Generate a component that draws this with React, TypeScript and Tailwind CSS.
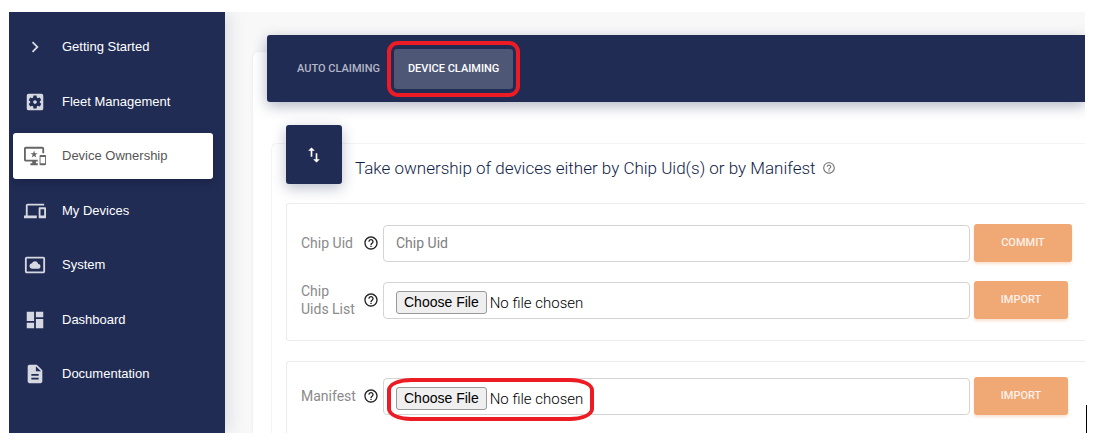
import type { ReactNode } from "react";
import type { IconType } from "react-icons";
import {
  MdChevronRight,
  MdSettingsApplications,
  MdImportantDevices,
  MdDevices,
  MdSettingsSystemDaydream,
  MdDashboard,
  MdDescription,
  MdHelpOutline,
  MdImportExport,
} from "react-icons/md";

const navItems: { label: string; icon: IconType; active?: boolean }[] = [
  { label: "Getting Started", icon: MdChevronRight },
  { label: "Fleet Management", icon: MdSettingsApplications },
  { label: "Device Ownership", icon: MdImportantDevices, active: true },
  { label: "My Devices", icon: MdDevices },
  { label: "System", icon: MdSettingsSystemDaydream },
  { label: "Dashboard", icon: MdDashboard },
  { label: "Documentation", icon: MdDescription },
];

function Sidebar() {
  return (
    <nav className="relative z-10 flex w-[216px] shrink-0 flex-col justify-between bg-[#212c55] pt-3 pr-3 pb-9 pl-1 font-['Liberation_Sans',Arial,sans-serif] text-[13px] shadow-[2px_0_18px_rgba(33,44,85,0.16)]">
      {navItems.map(({ label, icon: Icon, active }) => (
        <a
          key={label}
          href="#"
          className={
            active
              ? "flex h-[46px] items-center gap-4 rounded-[3px] bg-white pl-[11px] text-[#555] shadow-[0_4px_10px_rgba(0,0,0,0.2)]"
              : "flex h-[46px] items-center gap-4 pl-[11px] text-white"
          }
        >
          <Icon className={active ? "size-[22px] text-[#666]" : "size-[22px] text-[#d5d8e0]"} />
          {label}
        </a>
      ))}
    </nav>
  );
}

function Field({
  id,
  label,
  action,
  wide,
  children,
}: {
  id: string;
  label: string;
  action: string;
  wide?: boolean;
  children: ReactNode;
}) {
  return (
    <div className="flex h-[38px] items-center">
      <label htmlFor={id} className="w-[62px] shrink-0 pr-1 text-sm leading-[18px] text-[#8a8a8a]">
        {label}
      </label>
      <MdHelpOutline className="mr-1 size-4 shrink-0 text-[#222]" />
      {children}
      <div className="ml-1 w-[111px] shrink-0">
        <button
          type="button"
          className={
            wide
              ? "h-[38px] w-[98px] rounded-[3px] bg-[#f0a875] text-[11px] font-medium text-[#fdf1e8] shadow-[0_2px_3px_rgba(240,168,117,0.35)]"
              : "h-[38px] w-[94px] rounded-[3px] bg-[#f0a875] text-[11px] font-medium text-[#fdf1e8] shadow-[0_2px_3px_rgba(240,168,117,0.35)]"
          }
        >
          {action}
        </button>
      </div>
    </div>
  );
}

const fileInput =
  "h-[37px] min-w-0 flex-1 rounded border border-[#d4d4d4] bg-white pt-2 pl-3 text-[15px] font-light text-black file:mr-[3px] file:h-[23px] file:rounded-[3px] file:border file:border-solid file:border-[#999] file:bg-[#efefef] file:px-[7px] file:font-['Liberation_Sans',Arial,sans-serif] file:text-sm file:leading-5 file:font-normal file:text-black";

export default function App() {
  return (
    <div className="h-screen min-h-[445px] bg-white py-3 pl-[9px] font-[Roboto,sans-serif]">
      <div className="flex h-full overflow-hidden">
        <Sidebar />
        <main className="flex min-w-0 flex-1 flex-col overflow-hidden bg-[#f8f8f8] pt-10 pl-7">
          <section className="flex flex-1 flex-col rounded-tl-md bg-white pl-[14px] shadow-[0_0_4px_rgba(0,0,0,0.06)]">
            <div
              role="tablist"
              className="relative -mt-[17px] flex h-[67px] shrink-0 items-center rounded-l-[3px] bg-[#212c55] pl-4 text-[11px] font-medium shadow-[0_4px_14px_rgba(33,44,85,0.35)]"
            >
              <button type="button" role="tab" aria-selected="false" className="h-10 px-[14px] pt-[2px] text-[#b3b7c6]">
                AUTO CLAIMING
              </button>
              <button
                type="button"
                role="tab"
                aria-selected="true"
                className="relative h-10 rounded-[3px] bg-[#4f5777] px-[14px] pt-[2px] text-white"
              >
                DEVICE CLAIMING
                <span className="pointer-events-none absolute -inset-x-[7px] -inset-y-2 rounded-[11px] border-4 border-[#ed1c24]" />
              </button>
            </div>
            <div className="mt-[41px] ml-1 flex flex-1 flex-col rounded-tl-md border-t border-l border-[#f4f4f4] pl-[14px]">
              <div className="-mt-[19px] flex shrink-0 gap-[13px]">
                <div className="flex h-[59px] w-14 items-center justify-center rounded-[3px] bg-[#212c55] shadow-[0_4px_14px_rgba(33,44,85,0.3)]">
                  <MdImportExport className="size-5 text-white" />
                </div>
                <h1 className="flex items-center gap-1.5 pt-[26px] text-[17px] leading-6 font-light text-[#101c48]">
                  Take ownership of devices either by Chip Uid(s) or by Manifest
                  <MdHelpOutline className="size-[14px] text-[#777]" />
                </h1>
              </div>
              <form className="mt-[19px] flex flex-1 flex-col gap-5">
                <div className="flex flex-col gap-[19px] rounded-l-[3px] border border-r-0 border-[#ececec] pt-5 pb-[21px] pl-[14px]">
                  <Field id="chip-uid" label="Chip Uid" action="COMMIT" wide>
                    <input
                      id="chip-uid"
                      type="text"
                      placeholder="Chip Uid"
                      className="h-[37px] min-w-0 flex-1 rounded border border-[#d4d4d4] bg-white px-3 text-sm text-[#333] placeholder:text-[#808080]"
                    />
                  </Field>
                  <Field id="chip-list" label="Chip Uids&nbsp;List" action="IMPORT">
                    <input id="chip-list" type="file" className={fileInput} />
                  </Field>
                </div>
                <div className="flex-1 rounded-tl-[3px] border-t border-l border-[#ececec] pt-[15px] pl-[14px]">
                  <Field id="manifest" label="Manifest" action="IMPORT">
                    <div className="relative flex min-w-0 flex-1">
                      <input id="manifest" type="file" className={fileInput} />
                      <span className="pointer-events-none absolute top-0 left-1 h-[43px] w-[207px] rounded-[24px/12px] border-4 border-[#ed1c24]" />
                    </div>
                  </Field>
                </div>
              </form>
            </div>
          </section>
        </main>
        <div className="flex w-[17px] shrink-0 items-end pl-px">
          <span className="h-7 w-px bg-black" />
        </div>
      </div>
    </div>
  );
}
